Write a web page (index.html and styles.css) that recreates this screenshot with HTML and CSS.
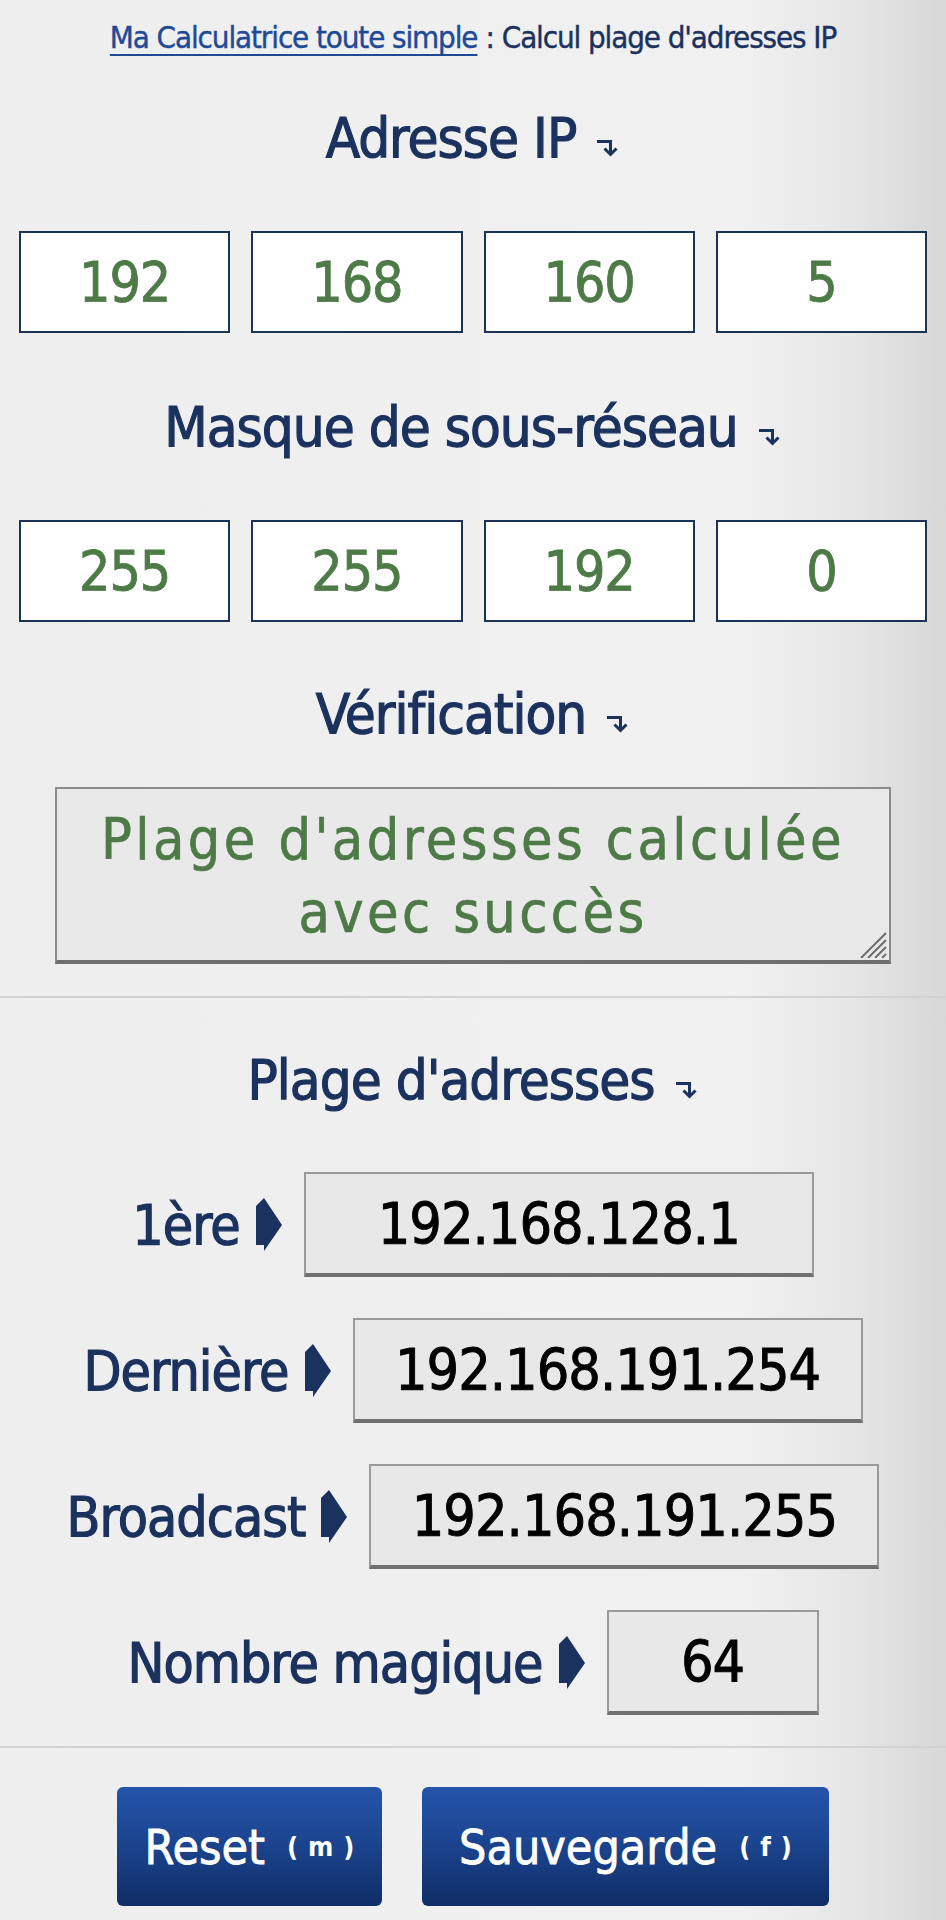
FILE: index.html
```html
<!DOCTYPE html>
<html lang="fr">
<head>
<meta charset="utf-8">
<title>Calcul plage d'adresses IP</title>
<link rel="stylesheet" href="styles.css">
</head>
<body>
<main class="page">
  <p class="crumb"><a href="#" class="crumb-link">Ma Calculatrice toute simple</a><span class="crumb-sep">:</span>Calcul plage d'adresses IP</p>

  <h2 class="heading heading-ip">Adresse IP<svg class="down" viewBox="0 0 24 18" width="24" height="18"><path d="M1 2.5H14.5V15" fill="none" stroke="#1b325f" stroke-width="3"/><path d="M8.5 9.5L14.5 15.5L20.5 9.5" fill="none" stroke="#1b325f" stroke-width="3"/></svg></h2>
  <div class="octets">
    <div class="octet">192</div>
    <div class="octet">168</div>
    <div class="octet">160</div>
    <div class="octet">5</div>
  </div>

  <h2 class="heading heading-mask">Masque de sous-réseau<svg class="down" viewBox="0 0 24 18" width="24" height="18"><path d="M1 2.5H14.5V15" fill="none" stroke="#1b325f" stroke-width="3"/><path d="M8.5 9.5L14.5 15.5L20.5 9.5" fill="none" stroke="#1b325f" stroke-width="3"/></svg></h2>
  <div class="octets octets-mask">
    <div class="octet">255</div>
    <div class="octet">255</div>
    <div class="octet">192</div>
    <div class="octet">0</div>
  </div>

  <h2 class="heading heading-check">Vérification<svg class="down" viewBox="0 0 24 18" width="24" height="18"><path d="M1 2.5H14.5V15" fill="none" stroke="#1b325f" stroke-width="3"/><path d="M8.5 9.5L14.5 15.5L20.5 9.5" fill="none" stroke="#1b325f" stroke-width="3"/></svg></h2>
  <div class="status">
    <p class="status-text">Plage d'adresses calculée<br>avec succès</p>
    <svg class="grip" viewBox="0 0 28 26" width="28" height="26"><path d="M2 26L27 1M9 26L27 8M16 26L27 15M23 26L27 22" stroke="#6d6d6d" stroke-width="2"/></svg>
  </div>

  <hr class="rule rule-top">

  <h2 class="heading heading-range">Plage d'adresses<svg class="down" viewBox="0 0 24 18" width="24" height="18"><path d="M1 2.5H14.5V15" fill="none" stroke="#1b325f" stroke-width="3"/><path d="M8.5 9.5L14.5 15.5L20.5 9.5" fill="none" stroke="#1b325f" stroke-width="3"/></svg></h2>

  <div class="rows">
    <div class="row">
      <span class="label">1ère</span>
      <svg class="pointer" viewBox="0 0 26 53" width="26" height="53"><path d="M0 8L8 0L26 27L8 53L8 47H0Z" fill="#1b325f"/></svg>
      <div class="value value-wide">192.168.128.1</div>
    </div>
    <div class="row">
      <span class="label">Dernière</span>
      <svg class="pointer" viewBox="0 0 26 53" width="26" height="53"><path d="M0 8L8 0L26 27L8 53L8 47H0Z" fill="#1b325f"/></svg>
      <div class="value value-wide">192.168.191.254</div>
    </div>
    <div class="row">
      <span class="label">Broadcast</span>
      <svg class="pointer" viewBox="0 0 26 53" width="26" height="53"><path d="M0 8L8 0L26 27L8 53L8 47H0Z" fill="#1b325f"/></svg>
      <div class="value value-wide">192.168.191.255</div>
    </div>
    <div class="row">
      <span class="label">Nombre magique</span>
      <svg class="pointer" viewBox="0 0 26 53" width="26" height="53"><path d="M0 8L8 0L26 27L8 53L8 47H0Z" fill="#1b325f"/></svg>
      <div class="value value-small">64</div>
    </div>
  </div>

  <hr class="rule rule-bottom">

  <div class="buttons">
    <button class="btn btn-reset" type="button">Reset<span class="key">(m)</span></button>
    <button class="btn btn-save" type="button">Sauvegarde<span class="key">(f)</span></button>
  </div>
</main>
</body>
</html>
```

FILE: styles.css
```css
html, body {
  margin: 0;
  padding: 0;
}

body {
  min-height: 1920px;
  background: linear-gradient(90deg, #eeeeee 0%, #f1f1f1 78%, #e6e6e6 90%, #d7d7d7 100%);
  font-family: "DejaVu Sans Condensed", "DejaVu Sans", sans-serif;
  font-stretch: condensed;
  color: #1b325f;
}

.page {
  display: flex;
  flex-direction: column;
}

.crumb {
  margin: 0;
  height: 74px;
  display: flex;
  align-items: center;
  justify-content: center;
  font-size: 31px;
  letter-spacing: -1.1px;
  color: #1b325f;
  white-space: nowrap;
  -webkit-text-stroke: 0.4px currentColor;
}

.crumb-link {
  color: #1f4a96;
  text-decoration: underline;
  text-decoration-thickness: 2px;
  text-underline-offset: 6px;
}

.crumb-sep {
  margin: 0 8px 0 8px;
}

.heading {
  margin: 0;
  height: 80px;
  line-height: 80px;
  display: flex;
  justify-content: center;
  align-items: baseline;
  font-size: 56px;
  letter-spacing: -1px;
  font-weight: normal;
  color: #1b325f;
  white-space: nowrap;
  -webkit-text-stroke: 1.2px currentColor;
}

.down {
  margin-left: 20px;
}

.heading-ip { margin-top: 24px; }
.heading-mask { margin-top: 54px; }
.heading-check { margin-top: 52px; }
.heading-range { margin-top: 42px; }

.octets {
  margin-top: 53px;
  padding: 0 19px;
  display: grid;
  grid-template-columns: repeat(4, 1fr);
  gap: 21px;
}

.octets-mask {
  margin-top: 53px;
}

.octet {
  height: 102px;
  box-sizing: border-box;
  border: 2px solid #1c3358;
  background: #ffffff;
  display: flex;
  align-items: center;
  justify-content: center;
  font-size: 55px;
  letter-spacing: -1px;
  color: #4d7a47;
  -webkit-text-stroke: 0.8px currentColor;
}

.status {
  position: relative;
  margin: 33px 55px 0 55px;
  height: 177px;
  box-sizing: border-box;
  background: #e9e9e9;
  border: 2px solid #8c8c8c;
  border-bottom: 4px solid #6e6e6e;
  display: flex;
  align-items: center;
  justify-content: center;
}

.status-text {
  margin: 0;
  text-align: center;
  font-size: 57px;
  line-height: 73px;
  letter-spacing: 3.4px;
  color: #4d7a47;
  padding-top: 2px;
  -webkit-text-stroke: 0.7px currentColor;
}

.grip {
  position: absolute;
  right: 2px;
  bottom: 2px;
}

.rule {
  margin: 0;
  border: 0;
  height: 2px;
  background: #d2d2d2;
}

.rule-top { margin-top: 32px; }
.rule-bottom { margin-top: 31px; }

.rows {
  margin-top: 52px;
  display: flex;
  flex-direction: column;
  align-items: center;
  gap: 41px;
}

.row {
  display: flex;
  align-items: center;
}

.label {
  font-size: 55px;
  letter-spacing: -1px;
  color: #1b325f;
  white-space: nowrap;
  -webkit-text-stroke: 1.2px currentColor;
}

.pointer {
  margin: 0 22px 0 16px;
  flex: none;
}

.value {
  height: 105px;
  box-sizing: border-box;
  background: #e8e8e8;
  border: 2px solid #9a9a9a;
  border-bottom: 4px solid #707070;
  display: flex;
  align-items: center;
  justify-content: center;
  font-size: 57px;
  letter-spacing: -1px;
  color: #000000;
  -webkit-text-stroke: 0.9px currentColor;
}

.value-wide { width: 510px; }
.value-small { width: 212px; }

.buttons {
  margin-top: 39px;
  display: flex;
  justify-content: center;
  gap: 40px;
}

.btn {
  height: 119px;
  border: 0;
  border-radius: 6px;
  background: linear-gradient(180deg, #2455aa 0%, #1c4590 45%, #0f2d66 100%);
  color: #ffffff;
  font-family: inherit;
  font-stretch: condensed;
  font-size: 48px;
  display: flex;
  align-items: center;
  justify-content: center;
  padding: 0;
  -webkit-text-stroke: 0.8px currentColor;
}

.btn-reset { width: 265px; }
.btn-save { width: 407px; }

.key {
  margin-left: 22px;
  margin-right: -10px;
  font-size: 27px;
  font-weight: bold;
  letter-spacing: 10px;
  -webkit-text-stroke: 0;
}
```
